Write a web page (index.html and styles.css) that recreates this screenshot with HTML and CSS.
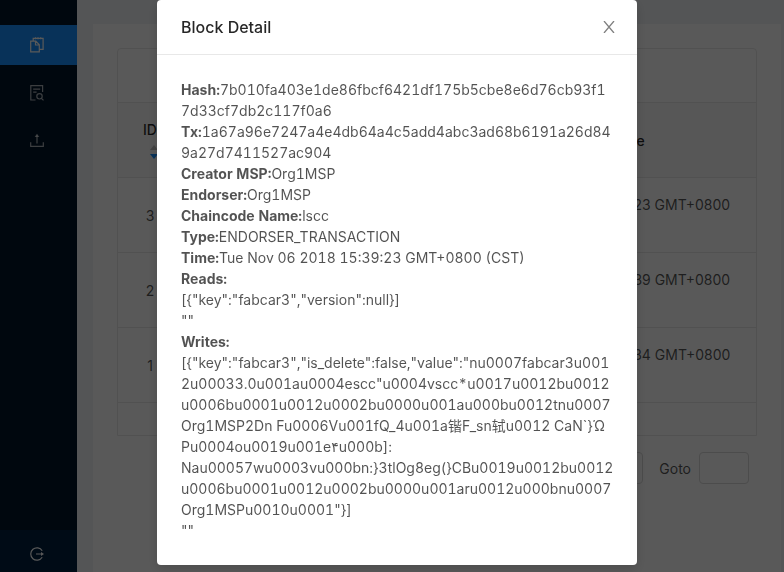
FILE: index.html
```html
<!DOCTYPE html>
<html lang="en">
<head>
<meta charset="utf-8">
<meta name="viewport" content="width=device-width, initial-scale=1">
<title>Block Detail</title>
<link rel="stylesheet" href="styles.css">
</head>
<body>
<div class="layout">
  <aside class="sider">
    <nav class="menu">
      <a class="menu-item active" href="#blocks" aria-label="Blocks">
        <svg class="icon" viewBox="0 0 14 16"><path d="M.7 4.2h5.1l3.5 3.6v7H.7zM5.5 4.2V8h3.8M3.2 4.2V1.4h9.9v11H9.3M5.5.2v2M8 .2v2M10.7.2v2"/></svg>
      </a>
      <a class="menu-item" href="#query" aria-label="Query">
        <svg class="icon" viewBox="0 0 14 16"><path d="M5.5 15H.8V.6h11.8V7M3.2 4.2h7M3.2 7.2h3.4M12.2 11.3a2.7 2.7 0 1 1-5.4 0 2.7 2.7 0 0 1 5.4 0zM11.3 13.1l2.2 2.2"/></svg>
      </a>
      <a class="menu-item" href="#upload" aria-label="Upload">
        <svg class="icon" viewBox="0 0 14 16"><path d="M.7 9.3v4h12.6v-4M7 10.5V2.5"/><path class="solid" d="M7 .8l2.3 3.3H4.7z"/></svg>
      </a>
    </nav>
    <button class="trigger" aria-label="Sign out">
      <svg class="icon" viewBox="0 0 14 16"><path d="M12.2 4.7a6.2 6.2 0 1 0 0 6.6M6 8h6"/><path class="solid" d="M11 6l3 2-3 2z"/></svg>
    </button>
  </aside>
  <main class="content">
    <section class="card">
      <div class="table-frame">
        <div class="table-title"></div>
        <table class="table">
          <thead>
            <tr>
              <th class="col-id">ID<span class="sorter"><i class="up"></i><i class="down"></i></span></th>
              <th></th>
              <th class="col-time">Create Time</th>
            </tr>
          </thead>
          <tbody>
            <tr><td>3</td><td></td><td>Tue Nov 06 2018 15:39:23 GMT+0800 (CST)</td></tr>
            <tr><td>2</td><td></td><td>Tue Nov 06 2018 15:38:39 GMT+0800 (CST)</td></tr>
            <tr><td>1</td><td></td><td>Tue Nov 06 2018 15:36:34 GMT+0800 (CST)</td></tr>
          </tbody>
        </table>
        <div class="table-footer"></div>
      </div>
      <div class="pagination">
        <select class="page-size" aria-label="Page size"><option>10 / page</option></select>
        <label for="goto">Goto</label>
        <input class="goto" id="goto" type="text">
      </div>
    </section>
  </main>
</div>
<div class="mask">
  <div class="modal" role="dialog" aria-modal="true" aria-labelledby="modal-title">
    <header class="modal-header">
      <h1 class="modal-title" id="modal-title">Block Detail</h1>
      <button class="close" aria-label="Close"><svg viewBox="0 0 12 12"><path d="M1 0l10 12M11 0L1 12"/></svg></button>
    </header>
    <div class="modal-body">
      <div><b>Hash:</b>7b010fa403e1de86fbcf6421df175b5cbe8e6d76cb93f1<br>7d33cf7db2c117f0a6</div>
      <div><b>Tx:</b>1a67a96e7247a4e4db64a4c5add4abc3ad68b6191a26d84<br>9a27d7411527ac904</div>
      <div><b>Creator MSP:</b>Org1MSP</div>
      <div><b>Endorser:</b>Org1MSP</div>
      <div><b>Chaincode Name:</b>lscc</div>
      <div><b>Type:</b>ENDORSER_TRANSACTION</div>
      <div><b>Time:</b>Tue Nov 06 2018 15:39:23 GMT+0800 (CST)</div>
      <div><b>Reads:</b></div>
      <div>[{"key":"fabcar3","version":null}]</div>
      <div>""</div>
      <div><b>Writes:</b></div>
      <div>[{"key":"fabcar3","is_delete":false,"value":"nu0007fabcar3u001<br>2u00033.0u001au0004escc"u0004vscc*u0017u0012bu0012<br>u0006bu0001u0012u0002bu0000u001au000bu0012tnu0007<br>Org1MSP2Dn Fu0006Vu001fQ_4u001a锴F_sn轼u0012 CaN`}Ώ<br>Pu0004ou0019u001e۴u000b]:<br>Nau00057wu0003vu000bn:}3tlOg8eg(}CBu0019u0012bu0012<br>u0006bu0001u0012u0002bu0000u001aru0012u000bnu0007<br>Org1MSPu0010u0001"}]</div>
      <div>""</div>
    </div>
  </div>
</div>
</body>
</html>
```
FILE: styles.css
```css
* {
  box-sizing: border-box;
}

body {
  margin: 0;
  font-family: Inter, "Noto Sans CJK SC", "DejaVu Sans", sans-serif;
  font-size: 14px;
  line-height: 21px;
  color: rgba(0, 0, 0, 0.68);
}

button,
input,
select {
  font: inherit;
  color: inherit;
}

.layout {
  display: flex;
  height: 100vh;
  overflow: hidden;
  background: #f0f2f5;
}

.sider {
  display: flex;
  flex-direction: column;
  flex: 0 0 77px;
  background: #001529;
}

.menu {
  display: flex;
  flex-direction: column;
  flex: 1;
  gap: 8px;
  padding-top: 25px;
}

.menu-item {
  display: flex;
  align-items: center;
  justify-content: center;
  height: 40px;
  padding-right: 3px;
  color: rgba(255, 255, 255, 0.67);
}

.menu-item.active {
  background: #1890ff;
  color: #fff;
}

.trigger {
  display: flex;
  align-items: center;
  justify-content: center;
  height: 42px;
  padding: 6px 3px 0 0;
  border: 0;
  background: #002140;
  color: #fff;
}

.icon {
  width: 14px;
  height: 16px;
  fill: none;
  stroke: currentColor;
  stroke-width: 1.2;
}

.icon .solid {
  fill: currentColor;
  stroke: none;
}

.content {
  flex: 1;
  padding: 24px 3px 0 16px;
}

.card {
  height: 100%;
  padding: 24px;
  background: #fff;
}

.table-frame {
  border: 1px solid #e8e8e8;
  border-radius: 4px 4px 0 0;
}

.table-title {
  height: 53px;
}

.table {
  width: 100%;
  table-layout: fixed;
  border-collapse: separate;
  border-spacing: 0;
  text-align: center;
}

.table th,
.table td {
  height: 75px;
  padding: 16px;
  border-top: 1px solid #e8e8e8;
}

.table th {
  background: #fafafa;
  color: rgba(0, 0, 0, 0.85);
  font-weight: 500;
}

.table .col-id {
  width: 64px;
}

.table .col-time {
  width: 304px;
}

.sorter {
  display: flex;
  flex-direction: column;
  align-items: center;
  gap: 4px;
  height: 21px;
  padding: 5px 0 0 7px;
}

.up,
.down {
  border: 4px solid transparent;
}

.up {
  border-top: 0;
  border-bottom: 5px solid #bfbfbf;
}

.down {
  border-bottom: 0;
  border-top: 5px solid #1890ff;
}

.table-footer {
  height: 33px;
  border-top: 1px solid #e8e8e8;
}

.pagination {
  display: flex;
  align-items: center;
  justify-content: flex-end;
  padding: 16px 8px 0 0;
}

.page-size,
.goto {
  height: 32px;
  border: 1px solid #d9d9d9;
  border-radius: 4px;
  background: #fff;
}

.page-size {
  width: 100px;
  margin-right: 16px;
  padding: 0 8px;
  appearance: none;
}

.goto {
  width: 50px;
  margin-left: 8px;
}

.mask {
  position: fixed;
  inset: 0;
  display: flex;
  align-items: flex-start;
  justify-content: center;
  padding-left: 10px;
  background: rgba(0, 0, 0, 0.65);
  overflow: hidden;
}

.modal {
  width: 480px;
  background: #fff;
  border-radius: 4px;
  box-shadow: 0 4px 12px rgba(0, 0, 0, 0.15);
}

.modal-header {
  display: flex;
  align-items: center;
  justify-content: space-between;
  padding: 16px 22px 16px 24px;
  border-bottom: 1px solid #e8e8e8;
}

.modal-title {
  margin: 0;
  font-size: 16px;
  line-height: 22px;
  font-weight: 500;
  color: rgba(0, 0, 0, 0.85);
}

.close {
  display: flex;
  padding: 0;
  border: 0;
  background: none;
  color: rgba(0, 0, 0, 0.5);
}

.close svg {
  width: 12px;
  height: 12px;
  fill: none;
  stroke: currentColor;
  stroke-width: 1.3;
}

.modal-body {
  padding: 24px;
  font-variant-numeric: tabular-nums;
  white-space: nowrap;
}

.modal-body b {
  font-weight: 700;
}
```
